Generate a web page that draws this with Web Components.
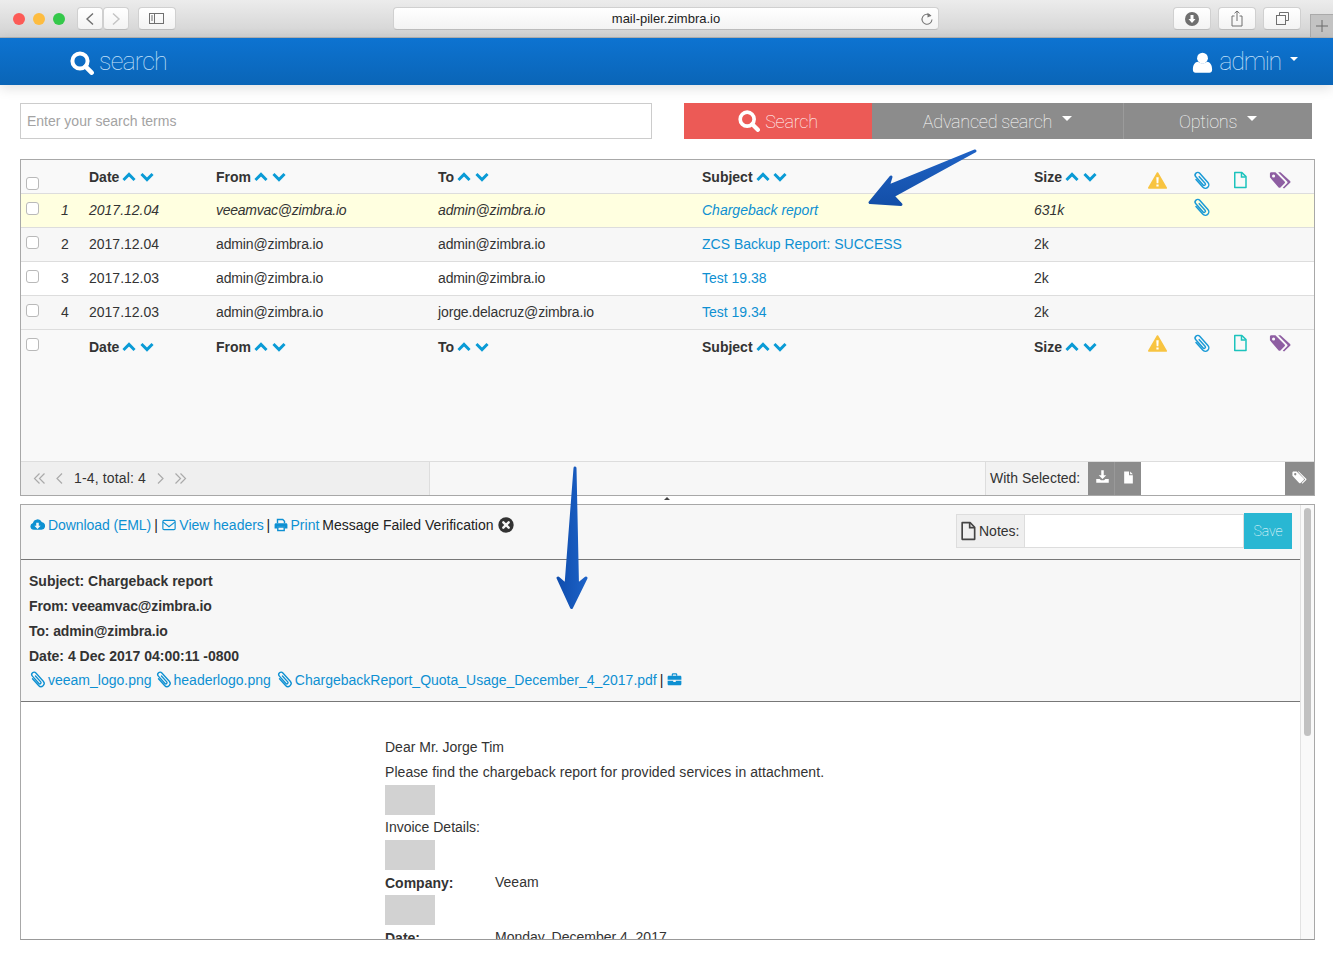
<!doctype html>
<html>
<head>
<meta charset="utf-8">
<title>mail-piler.zimbra.io</title>
<style>
  html, body { margin: 0; background: #fff; }
  body { width: 1333px; height: 960px; overflow: hidden; position: relative; font: 14px "Liberation Sans", Arial, sans-serif; color: #333; }
</style>
</head>
<body>
<browser-bar url="mail-piler.zimbra.io"></browser-bar>
<top-nav></top-nav>
<search-bar></search-bar>
<results-panel>
  <sort-head slot="head" check-top="17" icon-top="11"></sort-head>
  <msg-row num="1" date="2017.12.04" from="veeamvac@zimbra.io" to="admin@zimbra.io" subject="Chargeback report" size="631k" clip unread></msg-row>
  <msg-row num="2" date="2017.12.04" from="admin@zimbra.io" to="admin@zimbra.io" subject="ZCS Backup Report: SUCCESS" size="2k" alt></msg-row>
  <msg-row num="3" date="2017.12.03" from="admin@zimbra.io" to="admin@zimbra.io" subject="Test 19.38" size="2k"></msg-row>
  <msg-row num="4" date="2017.12.03" from="admin@zimbra.io" to="jorge.delacruz@zimbra.io" subject="Test 19.34" size="2k" alt></msg-row>
  <sort-head check-top="8" icon-top="4"></sort-head>
</results-panel>
<pane-grip></pane-grip>
<mail-preview></mail-preview>
<arrow-overlay></arrow-overlay>

<script>
// icon shapes, all on a 24 box
const ICONS = {
  search: `<circle cx="10" cy="10" r="7.6" fill="none" stroke="currentColor" stroke-width="4"/><path d="M15.6 15.6l6 6" stroke="currentColor" stroke-width="4.6" stroke-linecap="round"/>`,
  user: `<circle cx="12" cy="7" r="6.2" fill="currentColor"/><path d="M1 20c0-5.500 2.500-9 6-9 1.500 1.300 3 1.900 5 1.900s3.500-.6 5-1.900c3.500 0 6 3.500 6 9 0 2.500-1.300 3.800-3 3.800H4c-1.700 0-3-1.300-3-3.800z" fill="currentColor"/>`,
  up: `<path d="M2.500 17L12 7.500 21.500 17" fill="none" stroke="currentColor" stroke-width="5"/>`,
  down: `<path d="M2.500 7L12 16.500 21.500 7" fill="none" stroke="currentColor" stroke-width="5"/>`,
  warn: `<path d="M12 2.500L23 21.500H1z" fill="currentColor" stroke="currentColor" stroke-width="2" stroke-linejoin="round"/><path d="M10.500 8h3l-.4 7.500h-2.200zM10.600 17h2.800v2.700h-2.800z" fill="#fff"/>`,
  clip: `<g transform="rotate(-42 12 12)" fill="none" stroke="currentColor" stroke-width="1.700" stroke-linecap="round"><path d="M8 7v11.500a4 4 0 0 0 8 0V4.500a3 3 0 0 0-6 0V17a1.500 1.500 0 0 0 3 0V7"/></g>`,
  file: `<path d="M5 2h9.500L20 7.500V22H5z" fill="none" stroke="currentColor" stroke-width="2" stroke-linejoin="round"/><path d="M14 2.500V8h5.500" fill="none" stroke="currentColor" stroke-width="2"/>`,
  filled: `<path d="M4 1h9v7h7v15H4zM15 1l5 5h-5z" fill="currentColor"/>`,
  tags: `<path d="M1 6.500V2.500C1 1.700 1.700 1 2.500 1H7l10 10c.6.600.6 1.500 0 2l-4.500 4.500c-.5.500-1.500.5-2 0z" fill="currentColor" transform="translate(0 1.500)"/><path d="M10 2.500l9.800 10c.6.600.6 1.500 0 2l-4.800 4.800 1.500 1 6.500-6.300c.6-.6.600-1.500 0-2L12.500 2.500z" fill="currentColor"/><circle cx="5" cy="6.500" r="1.700" fill="#f9f9f9"/>`,
  tagw: `<path d="M2 8V3.500C2 2.700 2.700 2 3.500 2H8l10 10c.6.600.6 1.500 0 2l-4.500 4.500c-.5.500-1.500.5-2 0z" fill="currentColor"/><path d="M11 2l10.500 10.500c.5.500.5 1 0 1.500L16 19.500l-1-1 5-5L9.500 2z" fill="currentColor"/><circle cx="6" cy="6" r="1.600" fill="#8c8c8c"/>`,
  cloud: `<path d="M6 20.500a5.500 5.500 0 0 1-1.300-10.800A7.500 7.500 0 0 1 18.800 8a6.300 6.300 0 0 1-.3 12.500z" fill="currentColor"/><path d="M10 9h4v5h3l-5 5-5-5h3z" fill="#f7f7f7"/>`,
  mail: `<rect x="1.500" y="4" width="21" height="16" rx="2" fill="none" stroke="currentColor" stroke-width="2"/><path d="M2 7l10 8 10-8" fill="none" stroke="currentColor" stroke-width="2"/>`,
  print: `<path d="M6 9V2.500h9l3 3V9" fill="none" stroke="currentColor" stroke-width="2.400"/><path d="M1 11.500C1 10 2 9 3.500 9h17C22 9 23 10 23 11.500V18h-4.500v-3h-13v3H1z" fill="currentColor"/><rect x="6.500" y="15.500" width="11" height="6" fill="none" stroke="currentColor" stroke-width="2.400"/>`,
  times: `<circle cx="12" cy="12" r="11.500" fill="currentColor"/><path d="M8 8l8 8M16 8l-8 8" stroke="#f7f7f7" stroke-width="3.600" stroke-linecap="round"/>`,
  case: `<path d="M8.500 6V4.200C8.500 3.500 9 3 9.700 3h4.600c.7 0 1.200.5 1.200 1.200V6" fill="none" stroke="currentColor" stroke-width="2"/><path d="M1 8c0-1.100.9-2 2-2h18c1.100 0 2 .9 2 2v4.500H1zM1 14h9v2h4v-2h9v5c0 1.100-.9 2-2 2H3c-1.100 0-2-.9-2-2z" fill="currentColor"/>`,
  save: `<path d="M10 2h4v8h4l-6 6-6-6h4z" fill="currentColor"/><path d="M2 16h5.500l2 2h5l2-2H22v6H2z" fill="currentColor"/>`
};

class FaIcon extends HTMLElement {
  connectedCallback() {
    var name = this.getAttribute("name");
    var size = this.getAttribute("size") || 14;
    this.attachShadow({ mode: "open" }).innerHTML = `
      <style>:host { display: inline-flex; vertical-align: -2px; flex: none; } svg { display: block; }</style>
      <svg width="${size}" height="${size}" viewBox="0 0 24 24">${ICONS[name]}</svg>`;
  }
}
customElements.define("fa-icon", FaIcon);

class BrowserBar extends HTMLElement {
  connectedCallback() {
    var url = this.getAttribute("url");
    this.attachShadow({ mode: "open" }).innerHTML = `
      <style>
        :host { display: flex; align-items: center; height: 37px; border-bottom: 1px solid #b3b3b3; padding-left: 13px; box-sizing: content-box;
          background: linear-gradient(#ececec, #d2d2d2); position: relative; }
        .dot { width: 12px; height: 12px; border-radius: 50%; margin-right: 8px; }
        .btn { box-sizing: border-box; height: 23px; background: linear-gradient(#fff, #f3f3f3); border: 1px solid #d0d0d0; border-bottom-color: #bdbdbd; border-radius: 4px;
          display: flex; align-items: center; justify-content: center; color: #707070; }
        .nav { width: 26px; }
        .url { width: 546px; margin-left: 217px; position: relative; font: 13px "Liberation Sans", Arial, sans-serif; color: #222; }
        .url span { flex: 1; text-align: center; padding-left: 18px; }
        .url svg { margin-right: 4px; }
        .wide { width: 38px; margin-right: 7px; }
        .tab { position: absolute; right: 0; bottom: 0; width: 23px; height: 23px; box-sizing: border-box; background: #c3c3c3; border: 1px solid #aaa; border-right: 0; border-bottom: 0;
          display: flex; align-items: center; justify-content: center; }
        svg { display: block; }
      </style>
      <div class="dot" style="background:#fc5b57"></div>
      <div class="dot" style="background:#fdbc40"></div>
      <div class="dot" style="background:#34c84a;margin-right:12px"></div>
      <div class="btn nav"><svg width="10" height="14"><path d="M8 1.500L2 7l6 5.500" fill="none" stroke="#6f6f6f" stroke-width="1.400"/></svg></div>
      <div class="btn nav" style="margin-right:9px"><svg width="10" height="14"><path d="M2 1.500L8 7l-6 5.500" fill="none" stroke="#c4c4c4" stroke-width="1.400"/></svg></div>
      <div class="btn" style="width:38px"><svg width="16" height="12"><rect x=".5" y=".5" width="14" height="10" fill="none" stroke="#6f6f6f"/><path d="M5.500 .5v10M2 3h2M2 5h2M2 7h2" stroke="#6f6f6f" fill="none"/></svg></div>
      <div class="btn url"><span>${url}</span><svg width="14" height="14"><path d="M10.800 4A5 5 0 1 0 12 7.500" fill="none" stroke="#777" stroke-width="1.100"/><path d="M7.500 .8L11.500 3.800 7.500 5.500z" fill="#777"/></svg></div>
      <div style="flex:1"></div>
      <div class="btn wide"><svg width="14" height="14"><circle cx="7" cy="7" r="7" fill="#6f6f6f"/><path d="M5.500 3h3v4h2L7 11 3.500 7h2z" fill="#fff"/></svg></div>
      <div class="btn wide"><svg width="12" height="17"><path d="M3.500 6H1v10h10V6H8.500M6 11V1M3.500 3.300L6 1l2.500 2.300" fill="none" stroke="#6f6f6f"/></svg></div>
      <div class="btn wide" style="margin-right:32px"><svg width="13" height="13"><path d="M3.500 3V.5h9v8h-3" fill="none" stroke="#6f6f6f"/><rect x=".5" y="3.500" width="9" height="9" fill="none" stroke="#6f6f6f"/></svg></div>
      <div class="tab"><svg width="12" height="12"><path d="M6 0v12M0 6h12" stroke="#6a6a6a"/></svg></div>`;
  }
}
customElements.define("browser-bar", BrowserBar);

class TopNav extends HTMLElement {
  connectedCallback() {
    this.attachShadow({ mode: "open" }).innerHTML = `
      <style>
        :host { display: flex; align-items: center; justify-content: space-between; height: 47px; padding: 0 35px 0 70px;
          background: linear-gradient(#0d73d1, #0a65b7); box-shadow: 0 3px 12px rgba(0,0,0,.13); color: #fff; position: relative; }
        div { display: flex; align-items: center; }
        span { font: 100 25px Roboto, "Liberation Sans", sans-serif; letter-spacing: -.8px; color: #c6e2fa; line-height: 47px; }
        i { width: 0; height: 0; border: 4.500px solid transparent; border-top-color: #fff; border-bottom: 0; margin: -6px 0 0 9px; }
      </style>
      <div><fa-icon name="search" size="24" style="margin:2px 5px 0 0"></fa-icon><span>search</span></div>
      <div><fa-icon name="user" size="21" style="margin:2px 6px 0 0"></fa-icon><span style="letter-spacing:-1.300px">admin</span><i></i></div>`;
  }
}
customElements.define("top-nav", TopNav);

class SearchBar extends HTMLElement {
  connectedCallback() {
    this.attachShadow({ mode: "open" }).innerHTML = `
      <style>
        :host { display: flex; height: 36px; margin: 18px 21px 20px 20px; font: 14px "Liberation Sans", Arial, sans-serif; }
        .field { width: 632px; box-sizing: border-box; border: 1px solid #ccc; margin-right: 32px; padding-left: 6px; display: flex; align-items: center; color: #a3a3a3; }
        .btn { display: flex; align-items: center; justify-content: center; color: #fff; background: #8c8c8c; font: 100 18px Roboto, "Liberation Sans", sans-serif; letter-spacing: -.25px; }
        .go { width: 188px; background: #ec5a56; color: #fff; }
        i { width: 0; height: 0; border: 5px solid transparent; border-top-color: #fff; border-bottom: 0; margin: -6px 0 0 10px; }
      </style>
      <div class="field">Enter your search terms</div>
      <div class="btn go"><fa-icon name="search" size="22" style="margin-right:5px"></fa-icon>Search</div>
      <div class="btn" style="width:251px;border-right:1px solid #9b9b9b">Advanced search<i></i></div>
      <div class="btn" style="flex:1">Options<i></i></div>`;
  }
}
customElements.define("search-bar", SearchBar);

const COLS = "35px 33px 127px 222px 264px 332px 114px 46px 39px 37px 44px";

class SortHead extends HTMLElement {
  connectedCallback() {
    var checkTop = this.getAttribute("check-top");
    var iconTop = Number(this.getAttribute("icon-top"));
    var label = (t) => `<div class="c"><b>${t}</b><fa-icon name="up" size="14" style="margin-left:3px"></fa-icon><fa-icon name="down" size="14" style="margin-left:3.500px"></fa-icon></div>`;
    this.attachShadow({ mode: "open" }).innerHTML = `
      <style>
        :host { display: grid; grid-template-columns: ${COLS}; height: 34px; background: #f9f9f9; color: #0a9bd6; font: 14px "Liberation Sans", Arial, sans-serif; }
        .c { display: flex; align-items: center; }
        b { color: #333; }
        .i { margin-top: ${iconTop}px; }
        .hi { margin-top: ${iconTop - 1}px; }
        .chk { appearance: none; -webkit-appearance: none; width: 13px; height: 13px; box-sizing: border-box; margin: ${checkTop}px 0 0 5px; background: #fff; border: 1px solid #b9b9b9; border-radius: 3px; }
      </style>
      <div><input class="chk" type="checkbox"></div><div></div>
      ${label("Date")}${label("From")}${label("To")}${label("Subject")}${label("Size")}
      <div class="i" style="color:#f8c441"><fa-icon name="warn" size="19"></fa-icon></div>
      <div class="hi" style="color:#1a9ad6;margin-left:-3px"><fa-icon name="clip" size="21"></fa-icon></div>
      <div class="i" style="color:#1cc3bd;margin-left:-2px"><fa-icon name="file" size="18"></fa-icon></div>
      <div class="hi" style="color:#8e5ea2;margin-left:-1px"><fa-icon name="tags" size="22"></fa-icon></div>`;
  }
}
customElements.define("sort-head", SortHead);

class MsgRow extends HTMLElement {
  connectedCallback() {
    var a = (n) => this.getAttribute(n);
    var unread = this.hasAttribute("unread");
    var bg = unread ? "#ffffe0" : this.hasAttribute("alt") ? "#f7f7f7" : "#fff";
    var style = unread ? "italic" : "normal";
    var clip = this.hasAttribute("clip") ? `<fa-icon name="clip" size="21"></fa-icon>` : "";
    this.attachShadow({ mode: "open" }).innerHTML = `
      <style>
        :host { display: grid; grid-template-columns: ${COLS}; height: 31px; padding-bottom: 2px; border-bottom: 1px solid #ddd; background: ${bg}; align-items: center; font: ${style} 14px "Liberation Sans", Arial, sans-serif; color: #333; }
        a { color: #0e90d2; text-decoration: none; }
        .num { padding-left: 5px; }
        .mail { letter-spacing: -.13px; }
        .from { letter-spacing: ${unread ? "-.25px" : "-.13px"}; }
        .clip { color: #1a9ad6; align-self: start; margin: 3px 0 0 -3px; }
        .chk { appearance: none; -webkit-appearance: none; display: block; width: 13px; height: 13px; box-sizing: border-box; margin: -2px 0 0 5px; background: #fff; border: 1px solid #b9b9b9; border-radius: 3px; }
      </style>
      <div><input class="chk" type="checkbox"></div>
      <div class="num">${a("num")}</div>
      <div>${a("date")}</div><div class="from">${a("from")}</div><div class="mail">${a("to")}</div>
      <div><a href="#">${a("subject")}</a></div>
      <div>${a("size")}</div><div></div>
      <div class="clip">${clip}</div>`;
  }
}
customElements.define("msg-row", MsgRow);

class ResultsPanel extends HTMLElement {
  connectedCallback() {
    this.attachShadow({ mode: "open" }).innerHTML = `
      <style>
        :host { display: flex; flex-direction: column; height: 337px; box-sizing: border-box; margin: 0 18px 0 20px; border: 1px solid #a8a8a8; background: #f9f9f9; font: 14px "Liberation Sans", Arial, sans-serif; color: #333; }
        .list { flex: 1; }
        ::slotted([slot=head]) { border-bottom: 1px solid #ddd; height: 33px; }
        .foot { display: flex; height: 34px; border-top: 1px solid #ddd; box-sizing: border-box; background: #f7f7f7; }
        .pager { width: 409px; box-sizing: border-box; border-right: 1px solid #ddd; background: #efefef; display: flex; align-items: center; padding: 0 0 1px 12px; gap: 6px; }
        .pager span { margin: 0 4px; letter-spacing: .15px; }
        svg { display: block; }
        .sel { margin-left: auto; display: flex; }
        .lab { width: 103px; box-sizing: border-box; padding: 0 0 1px 4px; border-left: 1px solid #ddd; background: #f2f2f2; display: flex; align-items: center; }
        .act { background: #8c8c8c; color: #fff; display: flex; align-items: center; justify-content: center; }
        .box { width: 144px; background: #fff; }
      </style>
      <div class="list"><slot name="head"></slot><slot></slot></div>
      <div class="foot">
        <div class="pager">
          <svg width="13" height="13"><path d="M6.500 1.500L1.500 6.500l5 5M11.500 1.500L6.500 6.500l5 5" fill="none" stroke="#aaa" stroke-width="1.200"/></svg>
          <svg width="9" height="13" style="margin-left:3px"><path d="M7 1.500L2 6.500l5 5" fill="none" stroke="#aaa" stroke-width="1.200"/></svg>
          <span>1-4, total: 4</span>
          <svg width="9" height="13"><path d="M2 1.500L7 6.500l-5 5" fill="none" stroke="#aaa" stroke-width="1.200"/></svg>
          <svg width="13" height="13" style="margin-left:3px"><path d="M1.500 1.500L6.500 6.500l-5 5M6.500 1.500L11.500 6.500l-5 5" fill="none" stroke="#aaa" stroke-width="1.200"/></svg>
        </div>
        <div class="sel">
          <div class="lab">With Selected:</div>
          <div class="act" style="width:27px;box-sizing:border-box;border-right:1px solid #999;padding:0 0 4px 2px"><fa-icon name="save" size="15"></fa-icon></div>
          <div class="act" style="width:26px;padding-bottom:3px"><fa-icon name="filled" size="13"></fa-icon></div>
          <div class="box"></div>
          <div class="act" style="width:29px"><fa-icon name="tagw" size="17"></fa-icon></div>
        </div>
      </div>`;
  }
}
customElements.define("results-panel", ResultsPanel);

class PaneGrip extends HTMLElement {
  connectedCallback() {
    this.attachShadow({ mode: "open" }).innerHTML = `
      <style>
        :host { display: flex; justify-content: center; height: 8px; margin: 0 20px 0 20px; padding-top: 1px; box-sizing: border-box; }
        i { width: 0; height: 0; border: 3px solid transparent; border-bottom-color: #444; border-top: 0; }
      </style>
      <i></i>`;
  }
}
customElements.define("pane-grip", PaneGrip);

class MailPreview extends HTMLElement {
  connectedCallback() {
    var clip = (ml) => `<fa-icon name="clip" size="19" style="vertical-align:-4px;margin:0 1px 0 ${ml - 1}px"></fa-icon>`;
    this.attachShadow({ mode: "open" }).innerHTML = `
      <style>
        :host { display: flex; height: 436px; box-sizing: border-box; margin: 0 18px 0 20px; border: 1px solid #a8a8a8; border-bottom-color: #999; overflow: hidden; font: 14px "Liberation Sans", Arial, sans-serif; color: #333; }
        a { color: #0e90d2; text-decoration: none; }
        .main { flex: 1; min-width: 0; overflow: hidden; }
        .bar { height: 55px; box-sizing: border-box; background: #f7f7f7; border-bottom: 1px solid #777; padding: 8px 8px 0 8px; display: flex; justify-content: space-between; align-items: flex-start; }
        .links { line-height: 24px; white-space: nowrap; color: #222; }
        .notes { display: flex; height: 34px; margin-top: 1px; }
        .nlab { width: 69px; box-sizing: border-box; background: #efefef; border: 1px solid #ddd; display: flex; align-items: center; padding-left: 1px; gap: 1px; }
        .nbox { width: 219px; box-sizing: border-box; background: #fff; border: 1px solid #ddd; border-left: 0; }
        .save { width: 48px; height: 36px; margin-top: -1px; background: #29b7d3; color: #fff; display: flex; align-items: center; justify-content: center; font: 100 14px Roboto, "Liberation Sans", sans-serif; }
        .head { background: #f7f7f7; border-bottom: 1px solid #777; padding: 9px 8px 8px; line-height: 25px; }
        .head div { font-weight: bold; }
        .head .tight { letter-spacing: -.12px; }
        .head .att { font-weight: normal; height: 24px; line-height: 22px; color: #222; white-space: nowrap; }
        .body { background: #fff; padding: 33px 0 0 364px; line-height: 25px; height: 260px; }
        .ph { width: 50px; height: 30px; background: #d2d2d2; }
        .kv { display: flex; height: 25px; }
        .kv b { width: 110px; line-height: 27px; }
        .track { width: 14px; border-left: 1px solid #e2e2e2; background: #f9f9f9; padding: 3px 3px; box-sizing: border-box; }
        .thumb { height: 228px; background: #c1c1c1; border-radius: 4px; }
      </style>
      <div class="main">
        <div class="bar">
          <div class="links">
            <a href="#" style="letter-spacing:-.08px"><fa-icon name="cloud" size="15" style="margin:0 3px 0 1px"></fa-icon>Download (EML)</a><span style="margin:0 4.500px 0 3px">|</span><a href="#"><fa-icon name="mail" size="14" style="margin-right:3px"></fa-icon>View headers</a><span style="margin:0 3.500px 0 2.500px">|</span><a href="#"><fa-icon name="print" size="14" style="margin-right:3px"></fa-icon>Print</a><span style="margin:0 4px 0 3px">Message Failed Verification</span><fa-icon name="times" size="16" style="color:#333;vertical-align:-3px"></fa-icon>
          </div>
          <div class="notes">
            <div class="nlab"><fa-icon name="file" size="20" style="color:#444"></fa-icon>Notes:</div>
            <div class="nbox"></div>
            <div class="save">Save</div>
          </div>
        </div>
        <div class="head">
          <div>Subject: Chargeback report</div>
          <div class="tight">From: veeamvac@zimbra.io</div>
          <div class="tight">To: admin@zimbra.io</div>
          <div>Date: 4 Dec 2017 04:00:11 -0800</div>
          <div class="att"><a href="#">${clip(0)}veeam_logo.png</a><a href="#">${clip(3)}headerlogo.png</a><a href="#">${clip(5)}ChargebackReport_Quota_Usage_December_4_2017.pdf</a><span style="margin:0 4px 0 3px">|</span><a href="#"><fa-icon name="case" size="15"></fa-icon></a></div>
        </div>
        <div class="body">
          <div>Dear Mr. Jorge Tim</div>
          <div style="letter-spacing:.07px">Please find the chargeback report for provided services in attachment.</div>
          <div class="ph"></div>
          <div>Invoice Details:</div>
          <div class="ph"></div>
          <div class="kv"><b>Company:</b><span>Veeam</span></div>
          <div class="ph"></div>
          <div class="kv"><b>Date:</b><span>Monday, December 4, 2017</span></div>
        </div>
      </div>
      <div class="track"><div class="thumb"></div></div>`;
  }
}
customElements.define("mail-preview", MailPreview);

// the two blue call-out arrows sit over everything else
class ArrowOverlay extends HTMLElement {
  connectedCallback() {
    this.attachShadow({ mode: "open" }).innerHTML = `
      <style>:host { position: absolute; left: 0; top: 0; width: 1333px; height: 960px; pointer-events: none; } svg { display: block; }</style>
      <svg width="1333" height="960">
        <defs>
          <linearGradient id="g1" x1="0" y1="0" x2="0" y2="1"><stop offset="0" stop-color="#1f62c4"/><stop offset="1" stop-color="#134fa8"/></linearGradient>
          <linearGradient id="g2" x1="0" y1="0" x2="1" y2="0"><stop offset="0" stop-color="#0f4dae"/><stop offset="1" stop-color="#1d62c6"/></linearGradient>
        </defs>
        <path d="M975 151L888 186.500 891 177 870 202.500 901 204.500 893 196z" fill="url(#g1)" stroke="url(#g1)" stroke-width="3" stroke-linejoin="round"/>
        <path d="M575 468L577.500 585 586 578 571.500 607.500 558 578 566 585z" fill="url(#g2)" stroke="url(#g2)" stroke-width="3" stroke-linejoin="round"/>
      </svg>`;
  }
}
customElements.define("arrow-overlay", ArrowOverlay);
</script>
</body>
</html>
